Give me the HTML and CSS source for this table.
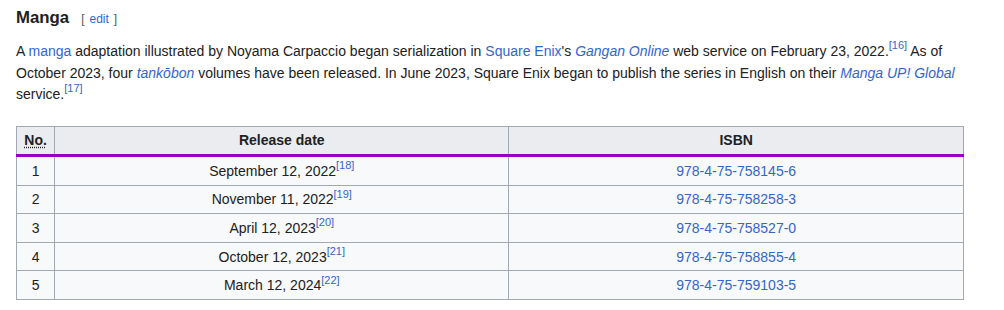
FILE: index.html
```html
<!DOCTYPE html>
<html>
<head>
<meta charset="utf-8">
<link rel="stylesheet" href="styles.css">
</head>
<body>
<div class="content">
  <h3 class="heading"><span class="title">Manga</span><span class="editsection"><span class="bracket">[</span><a href="#">edit</a><span class="bracket">]</span></span></h3>
  <p class="para">A <a href="#">manga</a> adaptation illustrated by Noyama Carpaccio began serialization in <a href="#">Square Enix</a>'s <i><a href="#">Gangan Online</a></i> web service on February 23, 2022.<sup class="ref"><a href="#">[16]</a></sup> As of October 2023, four <i><a href="#">tankōbon</a></i> volumes have been released. In June 2023, Square Enix began to publish the series in English on their <i><a href="#">Manga UP! Global</a></i> service.<sup class="ref"><a href="#">[17]</a></sup></p>
  <table class="wikitable">
    <thead>
      <tr>
        <th class="col-no"><abbr title="Number">No.</abbr></th>
        <th class="col-date">Release date</th>
        <th class="col-isbn">ISBN</th>
      </tr>
    </thead>
    <tbody>
      <tr><td>1</td><td>September 12, 2022<sup class="ref"><a href="#">[18]</a></sup></td><td><a href="#">978-4-75-758145-6</a></td></tr>
      <tr><td>2</td><td>November 11, 2022<sup class="ref"><a href="#">[19]</a></sup></td><td><a href="#">978-4-75-758258-3</a></td></tr>
      <tr><td>3</td><td>April 12, 2023<sup class="ref"><a href="#">[20]</a></sup></td><td><a href="#">978-4-75-758527-0</a></td></tr>
      <tr><td>4</td><td>October 12, 2023<sup class="ref"><a href="#">[21]</a></sup></td><td><a href="#">978-4-75-758855-4</a></td></tr>
      <tr><td>5</td><td>March 12, 2024<sup class="ref"><a href="#">[22]</a></sup></td><td><a href="#">978-4-75-759103-5</a></td></tr>
    </tbody>
  </table>
</div>
</body>
</html>
```
FILE: styles.css
```css
html, body {
  margin: 0;
  padding: 0;
  background: #ffffff;
}
body {
  font-family: "Liberation Sans", Arial, sans-serif;
  font-size: 14px;
  color: #202122;
}
.content {
  padding: 6px 40px 0 16px;
  width: 948px;
}
a {
  color: #3366cc;
  text-decoration: none;
}
.heading {
  margin: 0;
  font-size: 16.8px;
  font-weight: bold;
  line-height: 24px;
  display: flex;
  align-items: baseline;
}
.editsection {
  font-size: 12px;
  font-weight: normal;
  margin-left: 12px;
  color: #54595d;
}
.editsection a {
  margin: 0 5px;
}
.bracket {
  color: #54595d;
}
.para {
  margin: 10px 0 0 0;
  line-height: 21.5px;
}
sup.ref {
  font-size: 11px;
  line-height: 1;
  vertical-align: super;
  position: relative;
  top: -1px;
}
.wikitable {
  margin-top: 20px;
  width: 948px;
  border-collapse: collapse;
  background: #f8f9fa;
  border: 1px solid #a2a9b1;
  line-height: 22px;
}
.wikitable th,
.wikitable td {
  border: 1px solid #a2a9b1;
  padding: 2.8px 5.6px;
  text-align: center;
}
.wikitable th {
  background: #eaecf0;
  font-weight: bold;
  border-bottom: 3px solid #9400c8;
}
.col-no {
  width: 26px;
}
.col-date {
  width: 442px;
}
abbr {
  text-decoration: underline dotted;
  text-underline-offset: 2px;
}
```
